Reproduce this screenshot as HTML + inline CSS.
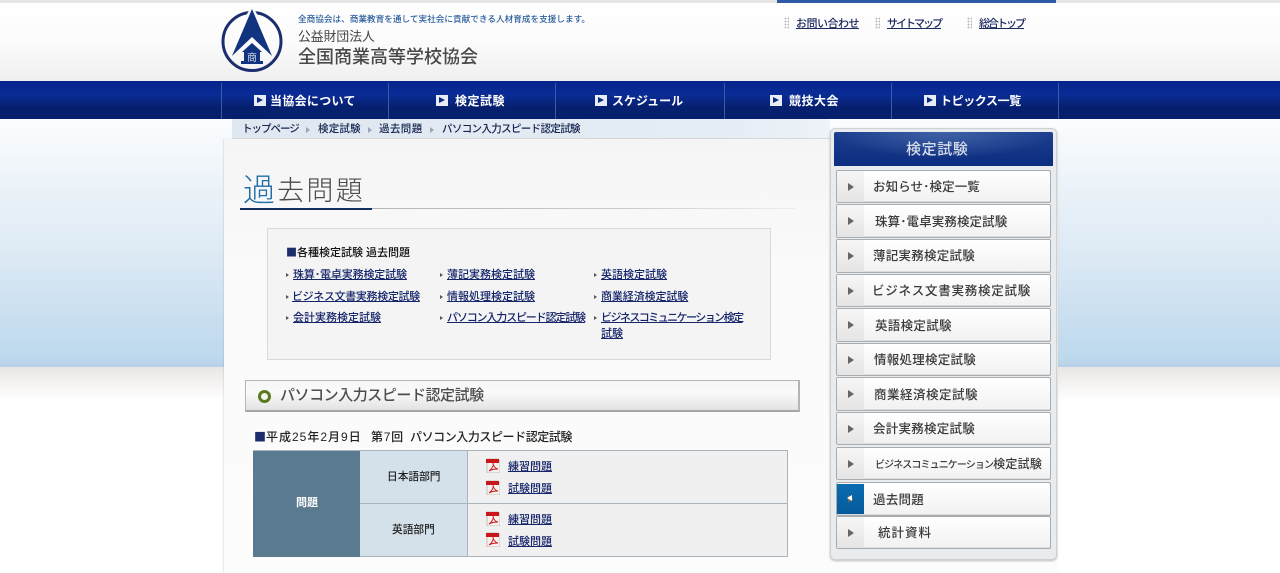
<!DOCTYPE html>
<html lang="ja"><head><meta charset="utf-8"><title>パソコン入力スピード認定試験</title>
<style>
html,body{margin:0;padding:0}
body{width:1280px;height:573px;overflow:hidden;position:relative;background:#fff;font-family:"Liberation Sans","Noto Sans CJK JP",sans-serif;font-size:11px;color:#222}
#w{position:absolute;left:0;top:0;width:1280px;height:573px;overflow:hidden;filter:blur(.3px)}
.b{position:absolute}
.t{position:absolute;white-space:nowrap;line-height:20px;height:20px}
a{color:#16256a;text-decoration:underline}
.sq{font-family:"Noto Sans CJK JP",sans-serif;color:#1b2e6b}
.n{color:#fff;font-weight:700;font-size:12px}
.ni{position:absolute;top:95px;width:12px;height:11px;background:#e8edf5}
.ni:after{content:"";position:absolute;left:3px;top:2px;border-left:6px solid #0a2a80;border-top:3.5px solid transparent;border-bottom:3.5px solid transparent}
.sep{position:absolute;top:83px;height:36px;width:1px;background:#3a5ba5}
.d{position:absolute;top:17px;width:5px;height:12px;background-image:radial-gradient(#bbb 0.8px,transparent 1px);background-size:3px 3px}
.bc{color:#14234f;font-size:10.5px;font-weight:500}
.ar{position:absolute;top:127px;border-left:4px solid #9aa6b5;border-top:3px solid transparent;border-bottom:3px solid transparent}
.l{font-size:11px;font-weight:500}
.bu{position:absolute;border-left:3px solid #555;border-top:2px solid transparent;border-bottom:2px solid transparent}
.it{position:absolute;left:836px;width:213px;background:linear-gradient(#fff,#f1f1f1);border:1px solid #a9acaf;border-radius:2px;box-shadow:inset 0 -1px 0 #ddd}
.it i{position:absolute;left:0;top:0;bottom:0;width:27px;background:linear-gradient(#f6f6f6,#e4e4e4)}
.it i:after{content:"";position:absolute;left:11px;top:50%;margin-top:-4px;border-left:6px solid #666;border-top:4px solid transparent;border-bottom:4px solid transparent}
.st{color:#3a3a3a;font-size:12.5px;font-weight:500}
.pdf{position:absolute;width:14px;height:15px}
</style></head><body><div id="w">

<!-- page background -->
<div class="b" style="left:0;top:0;width:1280px;height:3px;background:#e6e6e6"></div>
<div class="b" style="left:0;top:3px;width:1280px;height:78px;background:linear-gradient(#fff 0,#fbfbfb 50%,#efefef 100%)"></div>
<div class="b" style="left:0;top:119px;width:1280px;height:248px;background:linear-gradient(#fbfdfe 0,#f2f7fb 15%,#dce9f4 55%,#bdd8ed 97%,#b5cfe6 100%)"></div>
<div class="b" style="left:0;top:367px;width:1280px;height:40px;background:linear-gradient(#e9e7e6,#f3f1f0 35%,#fff 85%)"></div>

<!-- wrapper -->
<div class="b" style="left:224px;top:139px;width:834px;height:434px;background:linear-gradient(#f5f5f5,#fafafa 30%,#fcfcfc);box-shadow:-1px 0 1px rgba(120,130,140,.18)"></div>
<div class="b" style="left:232px;top:119px;width:598px;height:19px;background:linear-gradient(90deg,#dfe8f1,#e4ecf4 80%,#edf3f8);border-bottom:1px solid #d4d8dc"></div>

<!-- top bar -->
<div class="b" style="left:777px;top:0;width:279px;height:3px;background:#2f5aa6"></div>

<!-- logo -->
<svg class="b" style="left:218px;top:5px" width="70" height="72" viewBox="0 0 70 72">
<circle cx="34" cy="36.5" r="29" fill="none" stroke="#1b2f6e" stroke-width="3"/>
<path d="M34 1 L22 20 L46 20 Z" fill="#fcfcfc"/>
<path d="M34 4 L14 51 L34 32 L54 51 Z" fill="#12337f"/>
<path d="M34 38 L24 47 H44 Z" fill="#12337f"/>
<rect x="26" y="47" width="16" height="10" fill="#12337f"/>
<rect x="23" y="56" width="22" height="3" fill="#12337f"/>
<text x="34" y="56" text-anchor="middle" font-size="10" font-family="Noto Sans CJK JP" fill="#cfd8e8">商</text>
</svg>

<div class="t" style="left:298px;top:9px;font-size:8.65px;color:#2a5c9c;font-weight:500">全商協会は、商業教育を通して実社会に貢献できる人材育成を支援します。</div>
<div class="t" style="left:298px;top:27px;font-size:12.8px;color:#444">公益財団法人</div>
<div class="t" style="left:298px;top:47px;font-size:18px;color:#484848;font-weight:500">全国商業高等学校協会</div>

<div class="d" style="left:784px"></div>
<a class="t" href="#" style="left:796px;top:14px;letter-spacing:-.5px;color:#1d2a60;font-size:11px;font-weight:500">お問い合わせ</a>
<div class="d" style="left:875px"></div>
<a class="t" href="#" style="left:887px;top:14px;letter-spacing:-2px;color:#1d2a60;font-size:11px;font-weight:500">サイトマップ</a>
<div class="d" style="left:967px"></div>
<a class="t" href="#" style="left:979px;top:14px;letter-spacing:-2px;color:#1d2a60;font-size:11px;font-weight:500">総合トップ</a>

<!-- nav -->
<div class="b" style="left:0;top:81px;width:1280px;height:38px;background:linear-gradient(#07238d 0,#0a2c96 35%,#062070 68%,#051f6b 100%)"></div>
<div class="sep" style="left:221px"></div><div class="sep" style="left:388px"></div><div class="sep" style="left:555px"></div><div class="sep" style="left:724px"></div><div class="sep" style="left:891px"></div><div class="sep" style="left:1058px"></div>
<div class="ni" style="left:254px"></div><div class="t n" style="left:270px;top:91px;letter-spacing:.3px">当協会について</div>
<div class="ni" style="left:436px"></div><div class="t n" style="left:455px;top:91px;letter-spacing:.5px">検定試験</div>
<div class="ni" style="left:595px"></div><div class="t n" style="left:612px;top:91px;letter-spacing:0">スケジュール</div>
<div class="ni" style="left:770px"></div><div class="t n" style="left:789px;top:91px;letter-spacing:.5px">競技大会</div>
<div class="ni" style="left:924px"></div><div class="t n" style="left:940px;top:91px;letter-spacing:-.4px">トピックス一覧</div>

<!-- breadcrumb -->
<div class="t bc" style="left:242px;top:119px;letter-spacing:-1px">トップページ</div><div class="ar" style="left:306px"></div>
<div class="t bc" style="left:318px;top:119px;letter-spacing:.2px">検定試験</div><div class="ar" style="left:368px"></div>
<div class="t bc" style="left:379px;top:119px;letter-spacing:.4px">過去問題</div><div class="ar" style="left:430px"></div>
<div class="t bc" style="left:442px;top:119px;letter-spacing:-.65px">パソコン入力スピード認定試験</div>

<!-- title -->
<div class="t" style="left:243px;top:172px;height:36px;line-height:36px;font-size:32px;font-weight:300;color:#1f6ea8">過</div>
<div class="t" style="left:277px;top:173px;height:36px;line-height:36px;font-size:27px;font-weight:300;letter-spacing:2.4px;color:#4a4a4a">去問題</div>
<div class="b" style="left:240px;top:208px;width:556px;height:1px;background:linear-gradient(90deg,#aaa,#ccc 70%,#eee)"></div>
<div class="b" style="left:240px;top:208px;width:132px;height:2px;background:#12305f"></div>

<!-- box -->
<div class="b" style="left:267px;top:228px;width:502px;height:130px;background:#f4f4f4;border:1px solid #d9d9d9"></div>
<div class="t" style="left:286px;top:242px;font-size:11px;color:#111;font-weight:500"><span class="sq">■</span>各種検定試験 過去問題</div>

<div class="bu" style="left:286px;top:273px"></div><a class="t l" href="#" style="left:293px;top:265px;letter-spacing:-.15px">珠算･電卓実務検定試験</a>
<div class="bu" style="left:440px;top:273px"></div><a class="t l" href="#" style="left:447px;top:265px">薄記実務検定試験</a>
<div class="bu" style="left:594px;top:273px"></div><a class="t l" href="#" style="left:601px;top:265px">英語検定試験</a>
<div class="bu" style="left:286px;top:295px"></div><a class="t l" href="#" style="left:292px;top:287px;letter-spacing:-.35px">ビジネス文書実務検定試験</a>
<div class="bu" style="left:440px;top:295px"></div><a class="t l" href="#" style="left:447px;top:287px">情報処理検定試験</a>
<div class="bu" style="left:594px;top:295px"></div><a class="t l" href="#" style="left:601px;top:287px;letter-spacing:-.1px">商業経済検定試験</a>
<div class="bu" style="left:286px;top:316px"></div><a class="t l" href="#" style="left:293px;top:308px">会計実務検定試験</a>
<div class="bu" style="left:440px;top:316px"></div><a class="t l" href="#" style="left:447px;top:308px;letter-spacing:-1.15px">パソコン入力スピード認定試験</a>
<div class="bu" style="left:594px;top:316px"></div><a class="t l" href="#" style="left:601px;top:308px;letter-spacing:-1.55px">ビジネスコミュニケーション検定</a>
<a class="t l" href="#" style="left:601px;top:324px">試験</a>

<!-- section bar -->
<div class="b" style="left:245px;top:380px;width:552px;height:29px;background:linear-gradient(#f6f6f6,#fafafa 40%,#e2e2e2);border:1px solid #b5b5b5;border-bottom:2px solid #a5a5a5;border-right:2px solid #b5b5b5"></div>
<div class="b" style="left:258px;top:390px;width:7px;height:7px;border:3px solid #5b7a1e;border-radius:50%;background:#f4f4f4"></div>
<div class="t" style="left:280px;top:386px;font-size:15px;color:#4d4d4d;letter-spacing:-.45px;font-weight:500">パソコン入力スピード認定試験</div>

<!-- sub heading -->
<div class="t" style="left:254px;top:427px;font-size:12px;color:#222;font-weight:500"><span class="sq">■</span></div>
<div class="t" style="left:266px;top:427px;font-size:12px;color:#222;letter-spacing:1px;font-weight:500">平成25年2月9日</div>
<div class="t" style="left:371px;top:427px;font-size:12px;color:#222;letter-spacing:.7px;font-weight:500">第7回</div>
<div class="t" style="left:410px;top:427px;font-size:12px;color:#222;letter-spacing:-.43px;font-weight:500">パソコン入力スピード認定試験</div>

<!-- table -->
<div class="b" style="left:253px;top:450px;width:535px;height:107px;background:#f0f0f0;box-shadow:inset 0 0 0 1px #a9b4bc"></div>
<div class="b" style="left:253px;top:451px;width:107px;height:106px;background:#5a7a90"></div>
<div class="b" style="left:360px;top:451px;width:107px;height:105px;background:#d4e1eb"></div>
<div class="b" style="left:467px;top:451px;width:1px;height:105px;background:#a9b4bc"></div>
<div class="b" style="left:360px;top:503px;width:428px;height:1px;background:#a9b4bc"></div>
<div class="t" style="left:296px;top:493px;color:#fff;font-weight:700;font-size:11px">問題</div>
<div class="t" style="left:387px;top:467px;font-size:10.7px;color:#222;font-weight:500">日本語部門</div>
<div class="t" style="left:392px;top:520px;font-size:10.7px;color:#222;font-weight:500">英語部門</div>

<svg width="0" height="0" style="position:absolute"><defs><g id="p"><path d="M1 1H12L14 3V15H1Z" fill="#f5f1ee" stroke="#b5aaa5" stroke-width=".7"/><rect x="0" y="1" width="13" height="4" fill="#c8161c"/><path d="M3 13C6 11 8 7 7 5C7 8 10 11 12 11C9 11 6 11 3 13Z" fill="none" stroke="#c8161c" stroke-width=".9"/></g></defs></svg>
<svg class="pdf" style="left:486px;top:458px"><use href="#p"/></svg><a class="t l" href="#" style="left:508px;top:457px">練習問題</a>
<svg class="pdf" style="left:486px;top:480px"><use href="#p"/></svg><a class="t l" href="#" style="left:508px;top:479px">試験問題</a>
<svg class="pdf" style="left:486px;top:511px"><use href="#p"/></svg><a class="t l" href="#" style="left:508px;top:510px">練習問題</a>
<svg class="pdf" style="left:486px;top:532px"><use href="#p"/></svg><a class="t l" href="#" style="left:508px;top:532px">試験問題</a>

<!-- sidebar -->
<div class="b" style="left:830px;top:128px;width:225px;height:430px;background:#e9ecef;border:1px solid #cfd0d1;border-radius:5px;box-shadow:0 1px 2px #bbb"></div>
<div class="b" style="left:834px;top:132px;width:219px;height:34px;background:radial-gradient(ellipse 110px 26px at 50% 0,#3f62a6,transparent),linear-gradient(#1d3f8e,#0c2d80);border-radius:2px 2px 0 0"></div>
<div class="t" style="left:906px;top:140px;font-size:15px;font-weight:500;color:#d8deea;letter-spacing:.6px">検定試験</div>

<div class="it" style="top:170px;height:31px"><i></i></div><div class="t st" style="left:873px;top:177px;letter-spacing:.1px">お知らせ･検定一覧</div>
<div class="it" style="top:204px;height:32px"><i></i></div><div class="t st" style="left:875px;top:212px;letter-spacing:.1px">珠算･電卓実務検定試験</div>
<div class="it" style="top:239px;height:32px"><i></i></div><div class="t st" style="left:873px;top:246px;letter-spacing:.25px">薄記実務検定試験</div>
<div class="it" style="top:274px;height:31px"><i></i></div><div class="t st" style="left:872px;top:281px;letter-spacing:.75px">ビジネス文書実務検定試験</div>
<div class="it" style="top:308px;height:32px"><i></i></div><div class="t st" style="left:875px;top:316px;letter-spacing:.3px">英語検定試験</div>
<div class="it" style="top:343px;height:31px"><i></i></div><div class="t st" style="left:874px;top:350px;letter-spacing:.25px">情報処理検定試験</div>
<div class="it" style="top:377px;height:32px"><i></i></div><div class="t st" style="left:874px;top:385px;letter-spacing:.5px">商業経済検定試験</div>
<div class="it" style="top:412px;height:31px"><i></i></div><div class="t st" style="left:873px;top:419px;letter-spacing:.25px">会計実務検定試験</div>
<div class="it" style="top:447px;height:31px"><i></i></div><div class="t st" style="left:875px;top:454px;font-size:12px"><span style="font-size:10px;letter-spacing:-.9px">ビジネスコミュニケーション</span><span style="letter-spacing:.25px">検定試験</span></div>
<div class="it" style="top:482px;height:32px"><i style="background:linear-gradient(#0a6cb0,#055a9c);left:0;top:1px;bottom:1px"></i></div>
<div class="b" style="left:847px;top:495px;border-right:5px solid #fff;border-top:3.5px solid transparent;border-bottom:3.5px solid transparent"></div>
<div class="t st" style="left:873px;top:490px;letter-spacing:.25px">過去問題</div>
<div class="it" style="top:516px;height:31px"><i></i></div><div class="t st" style="left:878px;top:523px;letter-spacing:1px">統計資料</div>
</div></body></html>
